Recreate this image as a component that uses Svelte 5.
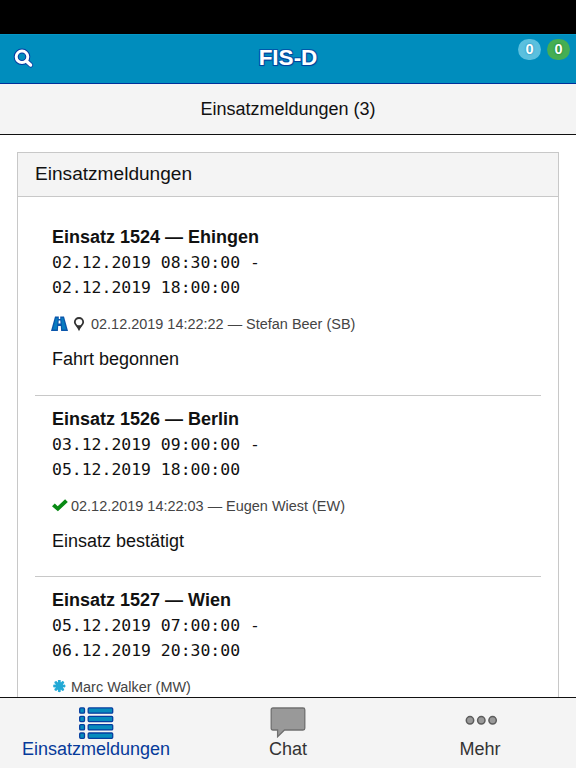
<script lang="ts">
  type Message = {
    id: number;
    place: string;
    from: string;
    to: string;
    status: 'road' | 'check' | 'new';
    located?: boolean;
    meta: string;
    text: string;
  };

  const messages: Message[] = [
    {
      id: 1524,
      place: 'Ehingen',
      from: '02.12.2019 08:30:00',
      to: '02.12.2019 18:00:00',
      status: 'road',
      located: true,
      meta: '02.12.2019 14:22:22 — Stefan Beer (SB)',
      text: 'Fahrt begonnen'
    },
    {
      id: 1526,
      place: 'Berlin',
      from: '03.12.2019 09:00:00',
      to: '05.12.2019 18:00:00',
      status: 'check',
      meta: '02.12.2019 14:22:03 — Eugen Wiest (EW)',
      text: 'Einsatz bestätigt'
    },
    {
      id: 1527,
      place: 'Wien',
      from: '05.12.2019 07:00:00',
      to: '06.12.2019 20:30:00',
      status: 'new',
      meta: 'Marc Walker (MW)',
      text: ''
    }
  ];

  const petals = [0, 45, 90, 135, 180, 225, 270, 315];
  const rows = [0.9, 9.3, 17.6, 26];
</script>

<div class="app">
  <div class="statusbar"></div>

  <header class="navbar">
    <button class="search" aria-label="Suche">
      <svg width="22" height="22" viewBox="0 0 22 22" fill="none" stroke-linecap="round">
        <g stroke="#0639a0" stroke-width="5">
          <circle cx="9" cy="8.8" r="5.8" />
          <path d="M13.5 13.2 17.6 17" />
        </g>
        <g stroke="#fff" stroke-width="3">
          <circle cx="9" cy="8.8" r="5.8" />
          <path d="M13.5 13.2 17.6 17" stroke-width="3.4" />
        </g>
      </svg>
    </button>
    <h1>FIS-D</h1>
    <div class="badges">
      <span class="badge info">0</span>
      <span class="badge success">0</span>
    </div>
  </header>

  <div class="subtitle">Einsatzmeldungen ({messages.length})</div>

  <main>
    <section class="card">
      <h2>Einsatzmeldungen</h2>
      <ul>
        {#each messages as message}
          <li>
            <h3>Einsatz {message.id} — {message.place}</h3>
            <div class="period">{message.from} -<br />{message.to}</div>
            <div class="meta">
              {#if message.status === 'road'}
                <svg class="road" width="17" height="16" viewBox="0 0 17 16">
                  <path d="M4 .5h9L17 15H0z" fill="#0a56ab" />
                  <path d="M4.8 2h2L5.8 13.5H1.9zM10.2 2h2l2.9 11.5h-3.9z" fill="#087cc0" />
                  <path d="M7.8 0h1.4v3H7.8zM7.7 4.6h1.6l.2 3h-2zM7.2 10h2.6l.4 6H6.8z" fill="#fff" />
                </svg>
              {:else if message.status === 'check'}
                <svg width="16" height="14" viewBox="0 0 16 14">
                  <path d="M0 7.3 2.8 4.6 5.7 7.2 13.1.3 15.8 2.9 5.9 12.3z" fill="#088a14" />
                </svg>
              {:else}
                <svg width="16" height="14" viewBox="0 0 16 14">
                  <g transform="translate(7.3 6)" fill="#23a9d5">
                    <circle r="3.9" />
                    {#each petals as angle}
                      <path d="M-.8 0-1.5-5.6Q0-7 1.5-5.6L.8 0z" transform="rotate({angle})" />
                    {/each}
                  </g>
                </svg>
              {/if}
              {#if message.located}
                <svg class="pin" width="12" height="16" viewBox="0 0 12 16">
                  <path
                    d="M6 2a4.2 4.2 0 0 0-4.2 4.2c0 2.3 2.7 3.8 4.2 7 1.5-3.2 4.2-4.7 4.2-7A4.2 4.2 0 0 0 6 2z"
                    fill="none"
                    stroke="#333"
                    stroke-width="1.8"
                  />
                  <path d="M3.4 9.3h5.2L6 14z" fill="#333" />
                </svg>
              {/if}
              <span>{message.meta}</span>
            </div>
            <p>{message.text}</p>
          </li>
        {/each}
      </ul>
    </section>
  </main>

  <nav class="tabbar">
    <a class="active" href="#messages">
      <svg width="36" height="34" viewBox="0 0 36 34">
        <g fill="#078bbd" stroke="#063d9f" stroke-width="1.3">
          {#each rows as y}
            <rect x="1.7" {y} width="4.8" height="5.3" rx="1" />
            <rect x="10.2" {y} width="24.5" height="5.3" rx="1" />
          {/each}
        </g>
      </svg>
      <span>Einsatzmeldungen</span>
    </a>
    <a href="#chat">
      <svg width="36" height="34" viewBox="0 0 36 34">
        <path
          d="M3 1h30q1.8 0 1.8 1.8v18.4q0 1.8-1.8 1.8H14.5L7.6 29.8V23H3q-1.8 0-1.8-1.8V2.8Q1.2 1 3 1z"
          fill="#999"
          stroke="#707070"
          stroke-width="1.3"
        />
      </svg>
      <span>Chat</span>
    </a>
    <a href="#more">
      <svg width="36" height="34" viewBox="0 0 36 34">
        <g fill="#999" stroke="#5c5c5c" stroke-width="1.5">
          <circle cx="8" cy="13.3" r="3.7" />
          <circle cx="19.3" cy="13.3" r="3.7" />
          <circle cx="30.6" cy="13.3" r="3.7" />
        </g>
      </svg>
      <span>Mehr</span>
    </a>
  </nav>
</div>

<style>
  .app {
    display: flex;
    flex-direction: column;
    height: 100vh;
    overflow: hidden;
    background: #fff;
    color: #111;
    font-family: 'Liberation Sans', Arial, sans-serif;
    font-size: 18px;
  }

  h1,
  h2,
  h3,
  p,
  ul {
    margin: 0;
    padding: 0;
  }

  .statusbar {
    flex: 0 0 34px;
    background: #000;
  }

  .navbar {
    display: grid;
    grid-template-columns: 1fr auto 1fr;
    flex: 0 0 50px;
    box-sizing: border-box;
    border-top: 1px solid #0597c7;
    border-bottom: 1px solid #00309a;
    background: #008dbd;
    color: #fff;
  }

  .search {
    display: flex;
    align-items: center;
    padding: 0 0 1px 13px;
    border: 0;
    background: none;
  }

  h1 {
    font-size: 22.5px;
    line-height: 46px;
    text-shadow:
      -1px -1px 0 #0057aa,
      1px -1px 0 #0057aa,
      -1px 1px 0 #0045a0,
      1px 1px 1px #003c9a;
  }

  .badges {
    display: flex;
    justify-content: flex-end;
    gap: 6px;
    padding: 4px 6px 0 0;
  }

  .badge {
    width: 23px;
    height: 21px;
    border-radius: 11px;
    font-size: 14.5px;
    font-weight: 700;
    line-height: 21px;
    text-align: center;
  }

  .info {
    background: #5bc0de;
    text-shadow: 0 0 2px #087fb0;
  }

  .success {
    background: #45ae53;
    text-shadow: 0 0 2px #007020;
  }

  .subtitle {
    flex: 0 0 51px;
    box-sizing: border-box;
    border-bottom: 1px solid #111;
    background: #f4f4f4;
    line-height: 50px;
    text-align: center;
  }

  main {
    flex: 1;
    min-height: 0;
    padding: 17px 17px 0;
    overflow: hidden;
  }

  .card {
    border: 1px solid #c8c8c8;
  }

  h2 {
    height: 43px;
    padding-left: 17px;
    border-bottom: 1px solid #c8c8c8;
    background: #f4f4f4;
    font-size: 19.1px;
    font-weight: 400;
    line-height: 41px;
  }

  ul {
    padding: 17px 17px;
    list-style: none;
  }

  li {
    box-sizing: border-box;
    height: 181px;
    padding: 11px 17px 0;
  }

  li + li {
    border-top: 1px solid #c8c8c8;
  }

  h3 {
    font-size: 18px;
    line-height: 25px;
  }

  .period {
    font-family: 'DejaVu Sans Mono', monospace;
    font-size: 16.45px;
    line-height: 25px;
  }

  .meta {
    display: flex;
    align-items: center;
    height: 24px;
    margin-top: 12px;
    color: #444;
    font-size: 14.46px;
    white-space: nowrap;
  }

  .meta svg {
    margin-right: 3px;
  }

  .meta .road {
    margin: 0 5px 0 -1px;
  }

  .meta .pin {
    margin-right: 6px;
  }

  p {
    margin-top: 11px;
    line-height: 25px;
  }

  .tabbar {
    display: grid;
    grid-template-columns: repeat(3, 1fr);
    flex: 0 0 71px;
    box-sizing: border-box;
    border-top: 1px solid #111;
    background: #f4f4f4;
  }

  .tabbar a {
    display: flex;
    flex-direction: column;
    align-items: center;
    padding-top: 9px;
    color: #333;
    line-height: 20px;
    text-decoration: none;
  }

  .tabbar svg {
    flex: none;
    margin-bottom: -2px;
  }

  .tabbar .active {
    color: #063a9a;
  }
</style>
